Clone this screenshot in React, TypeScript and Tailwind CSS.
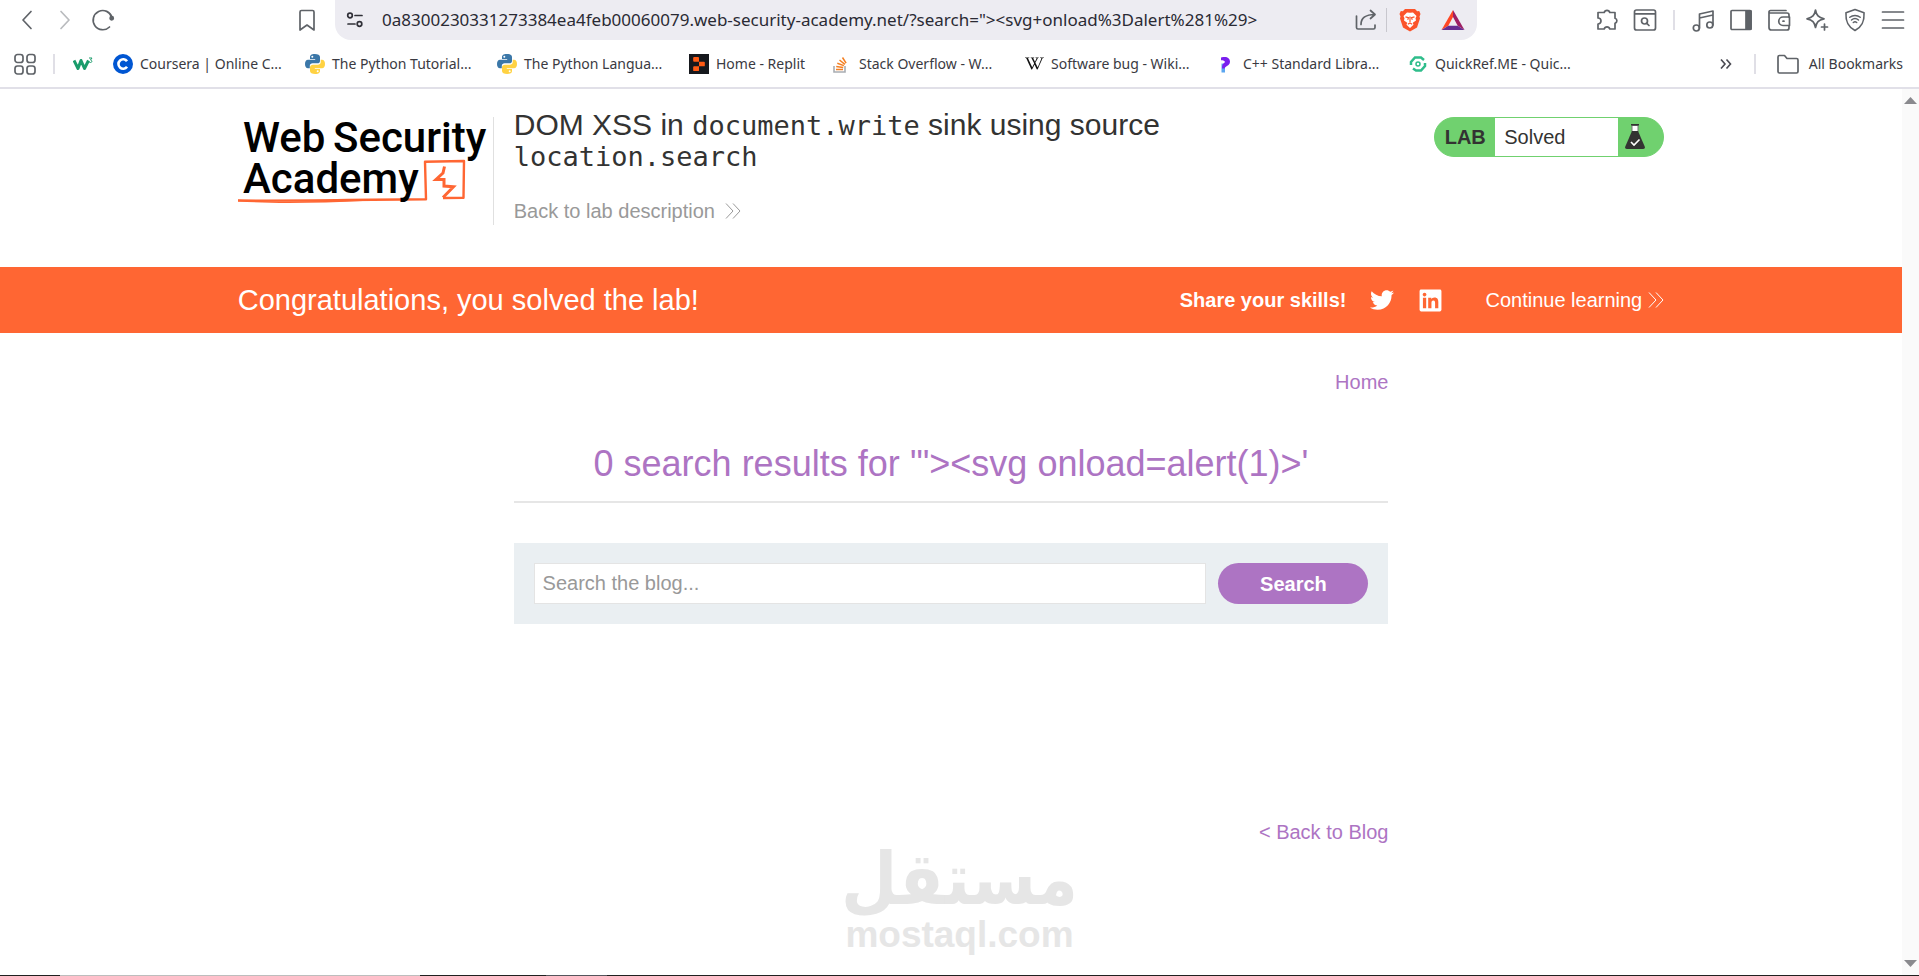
import React from 'react';
import { SiReplit, SiWikipedia } from 'react-icons/si';
import { FaTwitter, FaLinkedin } from 'react-icons/fa';

type IconProps = React.SVGProps<SVGSVGElement>;

const Icon: React.FC<IconProps> = ({ children, ...props }) => (
  <svg
    width="24"
    height="24"
    viewBox="0 0 24 24"
    fill="none"
    stroke="currentColor"
    strokeWidth={1.7}
    strokeLinecap="round"
    strokeLinejoin="round"
    aria-hidden="true"
    {...props}
  >
    {children}
  </svg>
);

const BackIcon = () => <Icon><path d="M16 3.5L8 12l8 8.5" /></Icon>;
const ForwardIcon = () => <Icon><path d="M8 3.5l8 8.5-8 8.5" /></Icon>;

const ReloadIcon = () => (
  <Icon>
    <path d="M18.5 19A9.6 9.6 0 1 1 21 9.5" />
    <circle cx="20.7" cy="10.2" r="1.6" fill="currentColor" />
  </Icon>
);

const BookmarkIcon = () => (
  <Icon><path d="M6.5 2.5h11a1.5 1.5 0 0 1 1.5 1.5v18l-7-5-7 5V4a1.5 1.5 0 0 1 1.5-1.5z" /></Icon>
);

const TuneIcon = () => (
  <Icon width="20" height="20" viewBox="0 0 20 20">
    <circle cx="5" cy="5.5" r="2.3" />
    <path d="M10 5.5h7M3 14h7" />
    <circle cx="14.5" cy="14" r="2.3" />
  </Icon>
);

const ShareIcon = () => (
  <Icon>
    <path d="M2.5 8v11.5A1.5 1.5 0 0 0 4 21h15.5a1.5 1.5 0 0 0 1.5-1.5V17" />
    <path d="M7 16.5c0-6 4-10 14-10M16.5 2.5l4.5 4-4.5 4" />
  </Icon>
);

const BraveIcon = () => (
  <svg width="22" height="24" viewBox="0 0 22 24" aria-hidden="true">
    <path d="M6 1h10l2.2 2.3 2-.2L21.5 6l-1 2.5.5 2-3 9-7 4-7-4-3-9 .5-2-1-2.5 1.3-2.9 2 .2z" fill="#fb542b" />
    <path d="M11 4.8L8 4.5 4.5 8l1 2.2-.5 2.3 3.2 2.2-.7 2L11 20l3.5-3.3-.7-2 3.2-2.2-.5-2.3 1-2.2L14 4.5z" fill="#fff" />
    <path d="M6.5 8.8l3 .8-.8 2.2M15.5 8.8l-3 .8.8 2.2M11 8.5V14M8.8 16.3L11 15l2.2 1.3" fill="none" stroke="#fb542b" strokeWidth="1.2" />
  </svg>
);

const BatIcon = () => (
  <svg width="24" height="22" viewBox="0 0 24 22" aria-hidden="true">
    <path d="M12 1L.5 21l6.8-4.2L12 8z" fill="#ff4724" />
    <path d="M12 1l11.5 20-6.8-4.2L12 8z" fill="#9e1f63" />
    <path d="M.5 21h23l-6.8-4.2H7.3z" fill="#662d91" />
  </svg>
);

const PuzzleIcon = () => (
  <Icon>
    <path d="M3 4.5h6.2a2.9 2.9 0 0 1 5.6 0H20v5.7a2.6 2.6 0 0 1 0 5V21h-5.2a2.9 2.9 0 0 0-5.6 0H3v-5a3 3 0 0 0 0-6z" />
  </Icon>
);

const FindIcon = () => (
  <Icon>
    <rect x="1.5" y="2" width="21" height="20" rx="2" />
    <path d="M2 5.8h20" />
    <circle cx="11.5" cy="13" r="3" />
    <path d="M13.8 15.3L16 17.5" />
  </Icon>
);

const MusicIcon = () => (
  <Icon>
    <path d="M8.5 20V6L22 3v14M8.5 10L22 7" />
    <circle cx="5.3" cy="20" r="3" />
    <circle cx="18.8" cy="17" r="3" />
  </Icon>
);

const SidebarIcon = () => (
  <Icon>
    <rect x="2" y="2.5" width="20" height="19" rx="1" />
    <path d="M17 3h5v18h-5z" fill="currentColor" />
  </Icon>
);

const WalletIcon = () => (
  <Icon>
    <path d="M22 9V7a2 2 0 0 0-2-2H3.5A1.5 1.5 0 0 1 2 3.8C2 3 2.8 2.5 3.5 2.5H19M2 4v15.5A2.5 2.5 0 0 0 4.5 22H20a2 2 0 0 0 2-2v-2" />
    <path d="M22.5 9H16a4 4 0 0 0 0 8.5h6.5z" />
    <path d="M16 13.2h1" />
  </Icon>
);

const SparkleIcon = () => (
  <Icon>
    <path d="M10.5 2c.9 5.4 3 7.5 8.5 8.8-5.5 1.2-7.6 3.3-8.5 8.7-.9-5.4-3-7.5-8.5-8.7C7.5 9.5 9.6 7.4 10.5 2z" />
    <path d="M19.5 16v6M16.5 19h6" />
  </Icon>
);

const ShieldIcon = () => (
  <Icon>
    <path d="M12 1.5l9 3.2c.5 9-2 14-9 17.8-7-3.8-9.5-8.8-9-17.8z" />
    <path d="M6.8 9.3a8 8 0 0 1 10.4 0M8.5 12a5.3 5.3 0 0 1 7 0M10.3 14.5a2.8 2.8 0 0 1 3.4 0" strokeWidth="1.5" />
  </Icon>
);

const MenuIcon = () => <Icon><path d="M1.5 4h21M1.5 12h21M1.5 20h21" /></Icon>;

const GridIcon = () => (
  <Icon>
    <rect x="2" y="2.5" width="8" height="8" rx="2.5" />
    <rect x="14" y="2.5" width="8" height="8" rx="2.5" />
    <rect x="2" y="14" width="8" height="8" rx="2.5" />
    <rect x="14" y="14" width="8" height="8" rx="2.5" />
  </Icon>
);

const FolderIcon = () => (
  <Icon><path d="M2 5a1.5 1.5 0 0 1 1.5-1.5h5l2.5 3h9.5A1.5 1.5 0 0 1 22 8v11.5a1.5 1.5 0 0 1-1.5 1.5h-17A1.5 1.5 0 0 1 2 19.5z" /></Icon>
);

const W3Icon = () => (
  <svg width="20" height="20" viewBox="0 0 20 20" fill="none" stroke="#1a9c6b" aria-hidden="true">
    <path d="M1 6.5l4 8 3-8 3.5 8 4-8" strokeWidth="3" strokeLinejoin="round" />
    <path d="M16 4h3l-1.5 2c1.5 0 2 2.5 0 2.5-.9 0-1.5-.5-1.5-.8" strokeWidth="1" />
  </svg>
);

const CourseraIcon = () => (
  <svg width="20" height="20" viewBox="0 0 20 20" aria-hidden="true">
    <circle cx="10" cy="10" r="10" fill="#0056d2" />
    <path d="M14 7.3a4.7 4.7 0 1 0 0 5.4" fill="none" stroke="#fff" strokeWidth="2.6" />
  </svg>
);

const PythonIcon = () => (
  <svg width="20" height="20" viewBox="0 0 20 20" aria-hidden="true">
    <path d="M9.8 0C6 0 5 1.5 5 3v2h5.2v.8H3C1 5.8 0 7.5 0 10s1 4.3 3 4.3h1.8v-2.4c0-1.5 1.3-2.6 2.8-2.6h4.9c1.400 0 2.5-1 2.5-2.4V3c0-2-2-3-5.2-3z" fill="#3b77a8" />
    <path d="M10.2 20c3.8 0 4.8-1.5 4.8-3v-2H9.8v-.8H17c2 0 3-1.7 3-4.2s-1-4.3-3-4.3h-1.3v2.5c0 1.5-1.3 2.5-2.8 2.5H8c-1.7 0-3 1-3 2.5V17c0 2 2 3 5.2 3z" fill="#ffd242" />
    <circle cx="7.3" cy="2.7" r="1" fill="#fff" />
    <circle cx="12.7" cy="17.3" r="1" fill="#fff" />
  </svg>
);

const ReplitIcon = () => (
  <span className="flex size-5 items-center justify-center bg-[#16181d] text-[#ff5a14]">
    <SiReplit size={14} />
  </span>
);

const StackIcon = () => (
  <svg width="20" height="20" viewBox="0 0 20 20" fill="none" aria-hidden="true">
    <path d="M2 12v6h11v-6" stroke="#a9adb2" strokeWidth="1.6" />
    <path d="M4 15.5h7M4.2 12.6l7 .8M5.3 9.3l6.6 2.3M7.5 6l5.4 4.3M10.5 3.5l3.6 5.7" stroke="#f48024" strokeWidth="1.5" />
  </svg>
);

const WikiIcon = () => <SiWikipedia size={19} color="#111" />;

const CppIcon = () => (
  <svg width="20" height="20" viewBox="0 0 20 20" aria-hidden="true">
    <path d="M5.5 9.5v9H9V14c0-2 1-3 2-4z" fill="#5ba6f0" />
    <path d="M5 3.5c4-.8 6-.5 7.500.8 2 1.800 2 5 0 6.800-1.500 1.300-3.200 1.300-4 3.400H6c0-3.500.8-5 3.200-6.500C8.500 6.500 6.500 6.200 5 6.200z" fill="#7a1fee" />
  </svg>
);

const QuickRefIcon = () => (
  <svg width="20" height="20" viewBox="0 0 20 20" fill="none" stroke="#2fbd8b" strokeWidth="2.5" aria-hidden="true">
    <path d="M3 11V8l4-4.5h6L16 6M17 9v3l-4 4.5H8l-3-2" />
    <circle cx="10" cy="10" r="2" strokeWidth="1.5" />
  </svg>
);

const ChevronsIcon: React.FC<IconProps> = (props) => (
  <svg width="16" height="16" viewBox="0 0 16 16" fill="none" stroke="currentColor" strokeWidth="1" aria-hidden="true" {...props}>
    <path d="M1 .5L8 8l-7 7.5M8 .5L15 8l-7 7.5" />
  </svg>
);

const FlaskIcon = () => (
  <svg width="20" height="26" viewBox="0 0 20 26" aria-hidden="true">
    <path d="M7 1.5h6V8H7z" fill="#fff" stroke="#777" strokeWidth="1" />
    <path d="M6 .8h8" stroke="#333332" strokeWidth="1.5" />
    <path d="M7 7h6l6.7 15.5c.6 1.5 0 2.5-1.5 2.5H1.8C.3 25-.3 24 .3 22.5z" fill="#333332" />
    <path d="M6 18l3 3 5.5-5.5" fill="none" stroke="#fff" strokeWidth="1.6" />
  </svg>
);

const AcademyLogo = () => (
  <svg width="252" height="90" viewBox="0 0 252 90" role="img" aria-label="Web Security Academy" className="overflow-visible">
    <path d="M0 83.5c60 .8 120-1 188-1.2l-1-37.6 39-.7-.5 36.7-20.5.3" fill="none" stroke="#ff6633" strokeWidth="2.4" strokeLinejoin="round" />
    <path d="M0 83.5c30 2.500 80 2 130-.5" fill="none" stroke="#ff6633" strokeWidth="1.4" />
    <path d="M206.5 49.5L205 56l-7 6.5h8V69l9.5.7L205 80.5" fill="none" stroke="#ff6633" strokeWidth="3" />
    <g fill="#000" fontSize="42" className="font-['Roboto',sans-serif] font-medium">
      <text x="5" y="35">Web</text>
      <text x="95" y="35">Security</text>
      <text x="5" y="76">Academy</text>
    </g>
  </svg>
);

const bookmarks = [
  { label: 'Coursera | Online C...', icon: <CourseraIcon /> },
  { label: 'The Python Tutorial...', icon: <PythonIcon /> },
  { label: 'The Python Langua...', icon: <PythonIcon /> },
  { label: 'Home - Replit', icon: <ReplitIcon />, short: true },
  { label: 'Stack Overflow - W...', icon: <StackIcon /> },
  { label: 'Software bug - Wiki...', icon: <WikiIcon /> },
  { label: 'C++ Standard Libra...', icon: <CppIcon /> },
  { label: 'QuickRef.ME - Quic...', icon: <QuickRefIcon /> },
];

const tools = [
  { label: 'Music', icon: <MusicIcon /> },
  { label: 'Sidebar', icon: <SidebarIcon /> },
  { label: 'Wallet', icon: <WalletIcon /> },
  { label: 'Leo AI', icon: <SparkleIcon /> },
  { label: 'VPN', icon: <ShieldIcon /> },
  { label: 'Menu', icon: <MenuIcon /> },
];

const Toolbar = () => (
  <div className="flex h-10 items-center pl-[15px] pr-[14px] text-[#5f6368]">
    <div className="flex items-center gap-[14px]">
      <button aria-label="Back"><BackIcon /></button>
      <button aria-label="Forward" className="text-[#b9bbbe]"><ForwardIcon /></button>
      <button aria-label="Reload"><ReloadIcon /></button>
    </div>
    <button aria-label="Bookmark this page" className="ml-auto mr-4"><BookmarkIcon /></button>
    <div className="flex h-10 w-[1142px] items-center rounded-b-2xl bg-[#edecf2] pl-[10px] pr-3">
      <button aria-label="Site information" className="text-[#303038]"><TuneIcon /></button>
      <input
        aria-label="Address"
        className="ml-[17px] min-w-0 flex-1 bg-transparent text-[17px] text-[#2a2a34] outline-none"
        defaultValue={'0a8300230331273384ea4feb00060079.web-security-academy.net/?search="><svg+onload%3Dalert%281%29>'}
      />
      <button aria-label="Share"><ShareIcon /></button>
      <span className="ml-2 mr-3 h-6 w-px bg-[#c8c7ce]" />
      <button aria-label="Brave Shields"><BraveIcon /></button>
      <button aria-label="Brave Rewards" className="ml-5"><BatIcon /></button>
    </div>
    <div className="ml-[118px] flex items-center gap-[14px]">
      <button aria-label="Extensions"><PuzzleIcon /></button>
      <button aria-label="Find"><FindIcon /></button>
    </div>
    <span className="mx-4 h-5 w-[2px] bg-[#e0dfe6]" />
    <div className="flex items-center gap-[14px]">
      {tools.map((tool) => (
        <button key={tool.label} aria-label={tool.label}>{tool.icon}</button>
      ))}
    </div>
  </div>
);

const BookmarksBar = () => (
  <div className="flex h-[47px] items-center pl-[13px] pr-4 text-[14px] text-[#3a3a42]">
    <button aria-label="Tab groups" className="text-[#5f6368]"><GridIcon /></button>
    <span className="ml-4 mr-[18px] h-5 w-[2px] bg-[#e0dfe6]" />
    <a href="#" aria-label="W3Schools" className="mr-5"><W3Icon /></a>
    {bookmarks.map((item) => (
      <a
        key={item.label}
        href="#"
        className={`flex shrink-0 items-center gap-[7px] whitespace-nowrap ${item.short ? 'w-[143px]' : 'w-[192px]'}`}
      >
        <span className="flex size-5 shrink-0 items-center justify-center">{item.icon}</span>
        {item.label}
      </a>
    ))}
    <button aria-label="More bookmarks" className="ml-auto mr-[22px] text-[#4a4a52]">
      <svg width="12" height="10" viewBox="0 0 12 10" fill="none" stroke="currentColor" strokeWidth="1.6" aria-hidden="true">
        <path d="M1 .5L5 5 1 9.5M6.5 .5l4 4.5-4 4.5" />
      </svg>
    </button>
    <span className="mr-5 h-5 w-[2px] bg-[#e0dfe6]" />
    <a href="#" className="flex items-center gap-[9px] whitespace-nowrap">
      <span className="text-[#5f6368]"><FolderIcon /></span>
      All Bookmarks
    </a>
  </div>
);

const LabHeader = () => (
  <header className="mx-auto flex w-3/4 items-start pb-[42px] pt-[28px]">
    <a href="#" className="block w-[256px] border-r border-[#e0e0e0] pb-[18px]"><AcademyLogo /></a>
    <div className="ml-5 w-[700px]">
      <h2 className="-mt-[8px] text-[30px] leading-[31px] text-[#333332]">
        DOM XSS in <code className="font-['DejaVu_Sans_Mono',monospace] text-[27px] leading-5">document.write</code> sink using source{' '}
        <code className="font-['DejaVu_Sans_Mono',monospace] text-[27px] leading-5">location.search</code>
      </h2>
      <a href="#" className="mt-[28px] flex items-center gap-[10px] text-[#999]">
        Back to lab description
        <ChevronsIcon />
      </a>
    </div>
    <div className="ml-auto flex h-10 w-[230px] items-stretch overflow-hidden rounded-full border border-[#70d16f] bg-[#70d16f] text-[#333332]">
      <span className="flex w-[60px] items-center justify-center font-bold">LAB</span>
      <p className="flex flex-1 items-center bg-white pl-[9px]">Solved</p>
      <span className="flex w-[45px] items-center pl-[7px]"><FlaskIcon /></span>
    </div>
  </header>
);

const Banner = () => (
  <section className="bg-[#ff6633] text-white">
    <div className="mx-auto flex h-[66px] w-3/4 items-center">
      <h4 className="text-[29px] leading-9">Congratulations, you solved the lab!</h4>
      <span className="ml-auto font-bold">Share your skills!</span>
      <a href="#" aria-label="Share on Twitter" className="ml-6"><FaTwitter size={24} /></a>
      <a href="#" aria-label="Share on LinkedIn" className="ml-6"><FaLinkedin size={25} /></a>
      <a href="#" className="ml-[42px] flex items-center gap-[6px]">
        Continue learning
        <ChevronsIcon />
      </a>
    </div>
  </section>
);

const Blog = () => (
  <main className="mx-auto w-[46%] text-[#ad74c3]">
    <nav className="mt-[37px] text-right"><a href="#">Home</a></nav>
    <h1 className="mt-[47px] border-b-2 border-[#e6e6e6] pb-[15px] text-center text-[36px] leading-[45px]">
      {`0 search results for '"><svg onload=alert(1)>'`}
    </h1>
    <form className="mt-10 flex gap-3 bg-[#eaeff2] p-5" onSubmit={(e) => e.preventDefault()}>
      <input
        type="text"
        aria-label="Search the blog"
        placeholder="Search the blog..."
        className="h-[41px] min-w-0 flex-1 border border-[#e4e4e4] bg-white px-2 text-[#333332] outline-none placeholder:text-[#999]"
      />
      <button type="submit" className="h-[41px] w-[150px] rounded-full bg-[#ad74c3] font-bold text-white">Search</button>
    </form>
    <div className="mt-[196px] text-right"><a href="#">&lt; Back to Blog</a></div>
  </main>
);

const Watermark = () => (
  <div className="pointer-events-none absolute inset-x-0 bottom-[21px] flex flex-col items-center font-bold text-[#e6e6e6]">
    <span lang="ar" dir="rtl" className="font-['DejaVu_Sans_Condensed','DejaVu_Sans',sans-serif] text-[72px] leading-[72px]">مستقل</span>
    <span className="text-[37px] leading-[40px]">mostaql.com</span>
  </div>
);

const App: React.FC = () => (
  <div className="relative flex min-h-screen flex-col bg-white font-['Liberation_Sans',sans-serif] text-[20px] leading-6">
    <div className="border-b-2 border-[#e1e0e8] font-['Noto_Sans',sans-serif]">
      <Toolbar />
      <BookmarksBar />
    </div>
    <div className="flex flex-1">
      <div className="min-w-0 flex-1">
        <LabHeader />
        <Banner />
        <Blog />
      </div>
      <div className="flex w-[17px] flex-col items-center justify-between bg-[#fafafa] py-2">
        <svg width="13" height="7" viewBox="0 0 13 7" aria-hidden="true"><path d="M6.5 0L13 7H0z" fill="#8a8a8e" /></svg>
        <svg width="13" height="7" viewBox="0 0 13 7" aria-hidden="true"><path d="M6.5 7L13 0H0z" fill="#8a8a8e" /></svg>
      </div>
    </div>
    <Watermark />
    <div className="flex h-px bg-[#202020]">
      <span className="ml-[60px] w-[360px] bg-[#bdbdbd]" />
      <span className="ml-[126px] w-[61px] bg-[#55555c]" />
    </div>
  </div>
);

export default App;
